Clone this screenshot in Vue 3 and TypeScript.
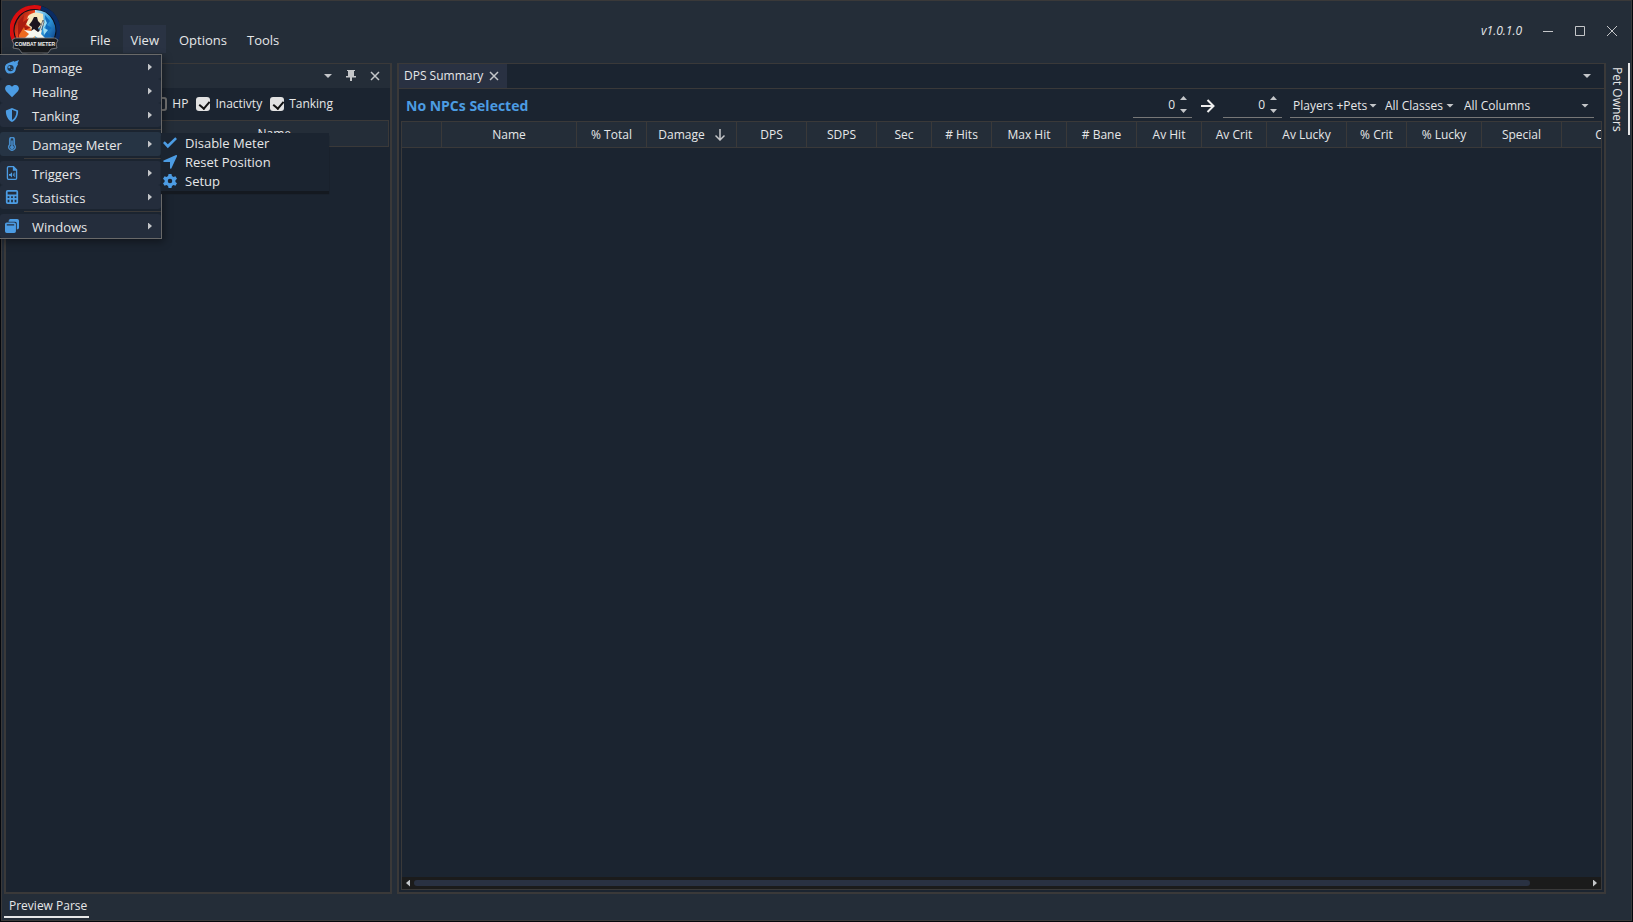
<script setup lang="ts">
import { ref } from 'vue'

interface Column { label: string; width: number }

const menus = ['File', 'View', 'Options', 'Tools']
const columns: Column[] = [
  { label: '', width: 40 },
  { label: 'Name', width: 135 },
  { label: '% Total', width: 70 },
  { label: 'Damage', width: 90 },
  { label: 'DPS', width: 70 },
  { label: 'SDPS', width: 70 },
  { label: 'Sec', width: 55 },
  { label: '# Hits', width: 60 },
  { label: 'Max Hit', width: 75 },
  { label: '# Bane', width: 70 },
  { label: 'Av Hit', width: 65 },
  { label: 'Av Crit', width: 65 },
  { label: 'Av Lucky', width: 80 },
  { label: '% Crit', width: 60 },
  { label: '% Lucky', width: 75 },
  { label: 'Special', width: 80 },
  { label: 'Class', width: 96 },
]
const groups = [
  ['Damage', 'Healing', 'Tanking'],
  ['Damage Meter'],
  ['Triggers', 'Statistics'],
  ['Windows'],
]
const filters = ref([
  { label: 'HP', on: false },
  { label: 'Inactivty', on: true },
  { label: 'Tanking', on: true },
])
const minSeconds = ref(0)
const maxSeconds = ref(0)
</script>

<template>
  <div class="window">
    <header class="titlebar">
      <svg class="logo" viewBox="0 0 50 50" aria-label="Combat Meter" role="img">
        <defs>
          <linearGradient id="fire" x1="0" y1="0" x2="1" y2="1">
            <stop offset="0" stop-color="#7a0f0c" />
            <stop offset="0.5" stop-color="#e8401c" />
            <stop offset="1" stop-color="#ffb347" />
          </linearGradient>
          <linearGradient id="ice" x1="0" y1="0" x2="1" y2="1">
            <stop offset="0" stop-color="#bfe9f8" />
            <stop offset="0.5" stop-color="#2f9ce0" />
            <stop offset="1" stop-color="#0b3f86" />
          </linearGradient>
        </defs>
        <circle cx="25" cy="25" r="25" fill="#0c1018" />
        <path d="M31 3A23 23 0 0 0 7 40" fill="none" stroke="#d90e10" stroke-width="4" />
        <path d="M31 3A23 23 0 0 1 43 40" fill="none" stroke="#0b2c62" stroke-width="4" />
        <path d="M25 5A20 20 0 0 0 8 36H25Z" fill="url(#fire)" />
        <path d="M25 5A20 20 0 0 1 42 36H25Z" fill="url(#ice)" />
        <path d="M18 11Q24 5 33 9L34 20L23 26L16 19Z" fill="#f6e7bd" />
        <path d="M8 17L14 10L13 17L19 13L15 21L21 22L11 28L16 29L8 33Z" fill="#a91b10" />
        <path d="M9 30L14 22L16 27L21 24L19 32H9Z" fill="#ee6a20" />
        <path d="M35 10L40 16L37 20L42 23L37 27L42 33H34L36 25Z" fill="#126dbd" />
        <path d="M35 14L37 18L34 23L38 25L34 30L33 23Z" fill="#9adcf4" />
        <path d="M24 12L27 12L28 16L31 19L28 23L30 27H21L22 22L19 20L22 16Z" fill="#1d1620" />
        <path d="M33 15L34 17L30 30L28 29Z" fill="#dfe6e8" stroke="#222831" stroke-width=".6" />
        <path d="M14 25L21 26L24 24L28 27L32 25L31 29L36 34H29L25 31L20 35H13L19 29Z" fill="#f7f7ef" />
        <path d="M2 35L5 33H45L48 35L46 39L47 43L41 44L38 48H12L9 44L3 43L4 39Z" fill="#181a1e" stroke="#85888c" stroke-width=".8" />
        <text x="25" y="41" text-anchor="middle" class="logo-text">COMBAT METER</text>
      </svg>
      <nav class="menubar">
        <button v-for="m in menus" :key="m" type="button" :class="{ open: m === 'View' }">{{ m }}</button>
      </nav>
      <span class="version">v1.0.1.0</span>
      <div class="winbuttons">
        <button type="button" aria-label="Minimize"><svg viewBox="0 0 10 10"><path d="M0 5.5H10" /></svg></button>
        <button type="button" aria-label="Maximize"><svg viewBox="0 0 10 10"><path d="M.5 .5H9.5V9.5H.5Z" /></svg></button>
        <button type="button" aria-label="Close"><svg viewBox="0 0 10 10"><path d="M0 0L10 10M10 0L0 10" /></svg></button>
      </div>
    </header>

    <main class="workspace">
      <section class="panel side">
        <div class="panel-head">
          <button type="button" aria-label="Panel menu"><i class="caret"></i></button>
          <button type="button" aria-label="Pin"><svg class="pin" viewBox="0 0 10 12"><path d="M1 0H9V1H8V6H10V7.500H6V11H4V7.500H0V6H2V1H1Z" fill="#c4c6c9" /></svg></button>
          <button type="button" aria-label="Close panel"><svg class="cross" viewBox="0 0 10 10"><path d="M1 1L9 9M9 1L1 9" /></svg></button>
        </div>
        <div class="filters">
          <label v-for="f in filters" :key="f.label"><input v-model="f.on" type="checkbox" /><span>{{ f.label }}</span></label>
        </div>
        <table class="names"><thead><tr><th class="num"></th><th>Name</th></tr></thead></table>
      </section>

      <section class="panel main">
        <div class="tabs">
          <div class="tab"><span>DPS Summary</span><button type="button" aria-label="Close tab"><svg class="cross" viewBox="0 0 10 10"><path d="M1 1L9 9M9 1L1 9" /></svg></button></div>
          <button type="button" class="tabmenu" aria-label="Tab list"><i class="caret"></i></button>
        </div>
        <div class="toolbar">
          <h1>No NPCs Selected</h1>
          <div class="spin">
            <input v-model="minSeconds" type="text" aria-label="Start seconds" />
            <div class="steps"><button type="button" aria-label="Increase start" class="up"></button><button type="button" aria-label="Decrease start" class="down"></button></div>
          </div>
          <svg class="arrow" viewBox="0 0 14 14"><path d="M0 7H13M6.500 1L12.500 7L6.500 13" /></svg>
          <div class="spin">
            <input v-model="maxSeconds" type="text" aria-label="End seconds" />
            <div class="steps"><button type="button" aria-label="Increase end" class="up"></button><button type="button" aria-label="Decrease end" class="down"></button></div>
          </div>
          <div class="selects">
            <div class="pick pets"><select aria-label="Players and pets"><option>Players +Pets</option></select><i class="caret"></i></div>
            <div class="pick classes"><select aria-label="Classes"><option>All Classes</option></select><i class="caret"></i></div>
            <div class="pick cols"><select aria-label="Columns"><option>All Columns</option></select><i class="caret"></i></div>
          </div>
        </div>
        <div class="grid">
          <div class="grid-clip">
            <table class="dps">
              <colgroup><col v-for="(c, i) in columns" :key="i" :style="{ width: c.width + 'px' }" /></colgroup>
              <thead>
                <tr>
                  <th v-for="(c, i) in columns" :key="i">
                    <span class="cell">{{ c.label }}<svg v-if="c.label === 'Damage'" class="sort" viewBox="0 0 10 12"><path d="M5 0V11M.500 6.500L5 11L9.500 6.500" /></svg></span>
                  </th>
                </tr>
              </thead>
            </table>
          </div>
          <div class="scroll"><i class="tri left"></i><div class="track"><div class="thumb"></div></div><i class="tri"></i></div>
        </div>
      </section>
      <aside class="dock"><button type="button">Pet Owners</button></aside>
    </main>

    <footer class="bottom"><button type="button">Preview Parse</button></footer>

    <div class="menu" role="menu">
      <div v-for="(g, gi) in groups" :key="gi" class="group">
        <button v-for="item in g" :key="item" type="button" role="menuitem" :class="{ active: item === 'Damage Meter' }">
          <svg v-if="item === 'Damage'" viewBox="0 0 16 16"><path fill-rule="evenodd" d="M16 0L14.300 4L15 4.500L12.500 9A6.300 6.300 0 1 1 4 3.300L10 1L10.500 2Z" /><circle cx="6.300" cy="9.200" r="3.600" fill="#24364b" /><circle cx="4.900" cy="8.200" r="1.300" /><circle cx="7.800" cy="10.700" r=".8" /></svg>
          <svg v-else-if="item === 'Healing'" viewBox="0 0 16 16"><path d="M8 15L1.300 8.200C-1.800 4.500 1.500 0 5.200 1.200Q7 1.800 8 3.200Q9 1.800 10.800 1.200C14.500 0 17.800 4.500 14.700 8.200Z" /></svg>
          <svg v-else-if="item === 'Tanking'" viewBox="0 0 16 16"><path fill-rule="evenodd" d="M8 0L15 2.800C15.200 9 12.500 13.800 8 16C3.500 13.800 .8 9 1 2.800ZM8 2V13.800C11.500 11.800 13 8.500 13 4Z" /></svg>
          <svg v-else-if="item === 'Damage Meter'" viewBox="0 0 16 16"><path d="M4.500 3A3.500 3.500 0 0 1 11.500 3V8.500A4.500 4.500 0 1 1 4.500 8.500Z" opacity=".85" /><path fill="#263444" fill-rule="evenodd" d="M6.500 3A1.500 1.500 0 0 1 9.500 3V9.200A2.800 2.800 0 1 1 6.500 9.200ZM7.100 4V10A2.100 2.100 0 1 0 8.900 10V4Z" /></svg>
          <svg v-else-if="item === 'Triggers'" viewBox="0 0 16 16"><path fill-rule="evenodd" d="M2 2Q2 0 4 0H10L14 4V14Q14 16 12 16H4Q2 16 2 14ZM3.500 2V14Q3.500 14.500 4 14.500H12Q12.500 14.500 12.500 14V5.500H9V1.500H4Q3.500 1.500 3.500 2Z" /><path d="M4.500 9H6L8 7V13L6 11H4.500ZM9 8.500H10V11.500H9ZM10.800 7.500H11.600V12.500H10.800Z" /></svg>
          <svg v-else-if="item === 'Statistics'" viewBox="0 0 16 16"><path fill-rule="evenodd" d="M1 2Q1 0 3 0H13Q15 0 15 2V14Q15 16 13 16H3Q1 16 1 14ZM3 2V5H13V2ZM3 7V9H5V7ZM7 7V9H9V7ZM11 7V9H13V7ZM3 11V14H5V11ZM7 11V14H9V11ZM11 11V14H13V11Z" /></svg>
          <svg v-else viewBox="0 0 16 16"><path d="M4 3Q4 0 6 0H14Q16 0 16 2V10Q16 12 13.500 12V5Q13.500 3 11.500 3Z" /><path fill-rule="evenodd" d="M0 6Q0 4 2 4H10.500Q12.500 4 12.500 6V14Q12.500 16 10.500 16H2Q0 16 0 14ZM2 6V7.500H10.500V6Z" /></svg>
          <span>{{ item }}</span><i class="tri"></i>
        </button>
      </div>
    </div>

    <div class="submenu" role="menu">
      <button type="button" role="menuitem"><svg viewBox="0 0 16 16"><path d="M0 8L2 6L5.500 9.500L14 1.500L16 3.500L5.500 14Z" /></svg><span>Disable Meter</span></button>
      <button type="button" role="menuitem"><svg viewBox="0 0 16 16"><path d="M15 0Q16.500 0 16 1.500L9.500 15.500Q8 16.500 8 14.500V8H1.500Q-.5 7.500 .7 6.300Z" /></svg><span>Reset Position</span></button>
      <button type="button" role="menuitem"><svg viewBox="0 0 16 16"><path fill-rule="evenodd" d="M6.300 0H9.700L10.200 2.300L12 3.300L14.200 2.500L16 5.400L14.200 7V9L16 10.600L14.200 13.500L12 12.700L10.200 13.700L9.700 16H6.300L5.800 13.700L4 12.700L1.800 13.500L0 10.600L1.800 9V7L0 5.400L1.800 2.500L4 3.300L5.800 2.300ZM8 5.400A2.600 2.600 0 1 0 8 10.600A2.600 2.600 0 0 0 8 5.400Z" /></svg><span>Setup</span></button>
    </div>
  </div>
</template>

<style>
html, body, #app { height: 100%; }
body { margin: 0; background: #05070c; }
</style>

<style scoped>
* { box-sizing: border-box; }
.window {
  --dark: #1b2430;
  --chrome: #242d38;
  --line: #3a3939;
  position: relative;
  display: flex;
  flex-direction: column;
  height: calc(100vh - 1px);
  margin: 0 1px;
  border: 1px solid var(--line);
  background: var(--chrome);
  color: #e6e7e8;
  font: 12px/16px "Open Sans", "Noto Sans", sans-serif;
}
button { margin: 0; padding: 0; border: 0; background: none; color: inherit; font: inherit; }
svg { display: block; fill: none; stroke: #c4c6c9; }
.titlebar { display: flex; height: 62px; flex: none; }
.logo { width: 50px; height: 50px; margin: 4px 0 0 8px; stroke: none; }
.logo-text { font: bold 5px "Liberation Sans", sans-serif; fill: #f0f0f0; }
.menubar { display: flex; margin: 24px auto 0 22px; height: 28px; gap: 5px; font-size: 13px; }
.menubar button { padding: 2px 7px 0 8px; }
.menubar .open { background: #2a3343; }
.version { margin-top: 22px; font-style: italic; }
.winbuttons { display: flex; gap: 22px; margin: 25px 14px 0 21px; height: 10px; }
.winbuttons button, .winbuttons svg { width: 10px; height: 10px; }
.workspace { display: flex; flex: 1; min-height: 0; padding-left: 2px; }
.panel { display: flex; flex-direction: column; background: var(--dark); border: 2px solid var(--line); border-top-width: 1px; min-width: 0; }
.side { flex: 0 0 388px; }
.main { flex: 1; margin-left: 5px; }
.panel-head { display: flex; justify-content: flex-end; align-items: center; gap: 14px; height: 24px; padding-right: 10px; background: var(--chrome); flex: none; }
.cross { width: 10px; height: 10px; stroke-width: 1.5; }
.pin { width: 10px; height: 12px; stroke: none; }
.caret { display: block; width: 8px; height: 4px; background: #c4c6c9; clip-path: polygon(0 0, 100% 0, 50% 100%); }
.filters { display: flex; justify-content: flex-end; gap: 8px; height: 32px; align-items: center; padding-right: 57px; }
.filters label { display: flex; align-items: center; gap: 5px; }
.filters input { appearance: none; position: relative; width: 14px; height: 14px; margin: 0; border: 2px solid #777; border-radius: 3px; }
.filters input:checked { border: 0; background: #e2e2e2; }
.filters input:checked::after { content: ""; position: absolute; left: 5px; top: 2px; width: 5px; height: 8px; border: solid #111; border-width: 0 2px 2px 0; transform: rotate(40deg); }
table { border-collapse: collapse; table-layout: fixed; width: 100%; }
th { height: 26px; padding: 0; font-weight: 500; background: var(--chrome); border: 1px solid var(--line); text-align: center; }
.names { width: calc(100% - 1px); }
.names .num { width: 154px; border-right: 0; }
.names th + th { border-left: 0; }
.tabs { display: flex; justify-content: space-between; height: 25px; border-bottom: 1px solid var(--line); flex: none; }
.tab { display: flex; align-items: center; gap: 6px; padding: 0 8px 0 5px; background: #293142; }
.tabmenu { padding: 0 13px; }
.toolbar { display: flex; height: 32px; padding: 0 10px 0 7px; flex: none; }
h1 { margin: 9px auto 0 0; font-size: 14px; line-height: 16px; color: #4c9ce3; }
.spin { display: flex; width: 59px; height: 24px; margin-top: 5px; border-bottom: 1px solid #777; }
.spin input { width: 42px; height: 20px; padding: 0; border: 0; outline: 0; background: none; color: inherit; font: inherit; text-align: right; }
.steps { display: flex; flex-direction: column; justify-content: space-between; height: 17px; margin-left: 5px; margin-top: 2px; }
.steps button { width: 7px; height: 4px; background: #c4c6c9; clip-path: polygon(0 0, 100% 0, 50% 100%); }
.steps .up { clip-path: polygon(50% 0, 100% 100%, 0 100%); }
.arrow { width: 14px; height: 14px; margin: 10px 8px 0 9px; stroke: #eee; stroke-width: 2; }
.selects { display: flex; height: 24px; margin: 5px 0 0 8px; border-bottom: 1px solid #777; }
.pick { display: flex; align-items: center; }
.pick select { flex: 1; appearance: none; min-width: 0; padding: 0 0 0 3px; border: 0; background: none; color: inherit; font: inherit; }
.pets { width: 87px; }
.classes { width: 77px; padding-left: 5px; }
.cols { width: 140px; padding: 0 5px 0 7px; }
.grid { display: flex; flex-direction: column; flex: 1; min-height: 0; margin: 0 2px 2px 2px; border: 1px solid var(--line); border-top: 0; }
.grid-clip { flex: 1; overflow: hidden; }
.dps { width: 1256px; margin-left: -1px; }
.cell { display: flex; align-items: center; justify-content: center; gap: 10px; }
.sort { width: 10px; height: 12px; stroke-width: 1.5; }
.scroll { display: flex; align-items: center; justify-content: space-between; height: 12px; padding: 0 4px; background: #1b1b1b; }
.tri { display: block; width: 4px; height: 7px; background: #c4c6c9; clip-path: polygon(0 0, 100% 50%, 0 100%); }
.tri.left { transform: scaleX(-1); }
.track { flex: 1; margin: 0 4px; }
.thumb { width: 95%; height: 6px; border-radius: 3px; background: #293142; }
.dock { width: 25px; flex: none; display: flex; align-items: flex-start; }
.dock button { writing-mode: vertical-rl; width: 24px; height: 72px; border-right: 2px solid #e6e7e8; padding-right: 1px; }
.bottom { height: 26px; flex: none; padding-left: 2px; }
.bottom button { height: 24px; padding: 2px 2px 0 5px; border-bottom: 2px solid #e6e7e8; }
.menu { position: absolute; left: -3px; top: 53px; width: 163px; border: 1px solid #696969; background: var(--dark); font-size: 13px; box-shadow: 2px 3px 8px #0006; }
.group + .group { border-top: 5px solid var(--dark); position: relative; }
.group + .group::before { content: ""; position: absolute; top: -3px; left: 24px; right: 0; height: 1px; background: var(--line); }
.menu button { display: flex; align-items: center; width: 100%; height: 24px; background: #242d3c; padding: 0 9px 0 5px; border-radius: 3px; }
.menu svg, .submenu svg { width: 14px; height: 14px; fill: #4c9ce3; stroke: none; flex: none; }
.menu span { margin: 2px auto 0 13px; }
.menu .active { background: #263444; }
.submenu { position: absolute; left: 159px; top: 132px; width: 168px; padding-bottom: 1px; background: var(--dark); font-size: 13px; box-shadow: 0 3px 1px #141920; }
.submenu button { display: flex; align-items: center; width: 100%; height: 19px; padding-left: 2px; }
.submenu span { margin-left: 8px; }
</style>
